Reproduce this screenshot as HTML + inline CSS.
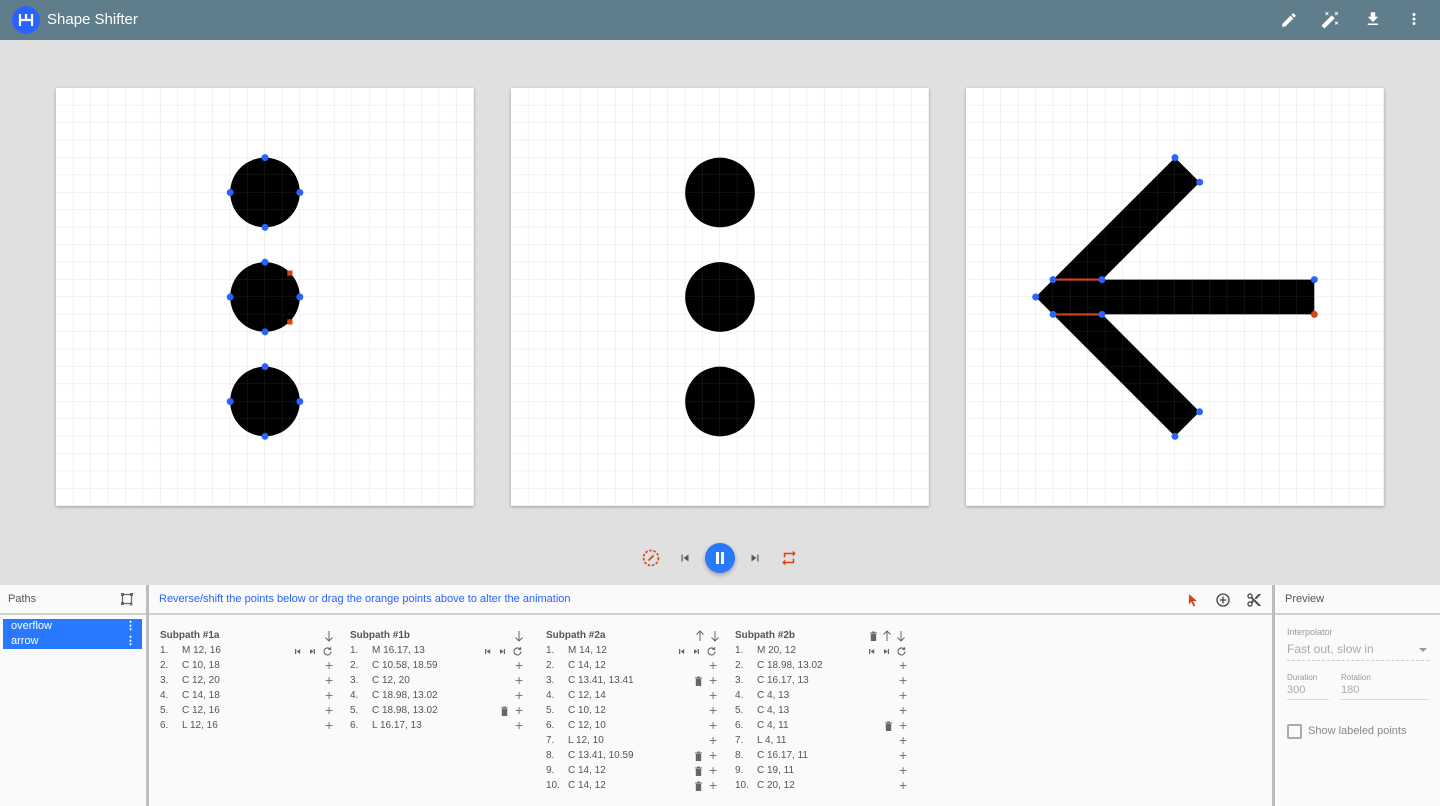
<!DOCTYPE html>
<html><head><meta charset="utf-8"><style>
*{box-sizing:border-box;margin:0;padding:0}
body{width:1440px;height:806px;overflow:hidden;background:#e0e0e0;font-family:"Liberation Sans",sans-serif;position:relative}
.top{position:absolute;left:0;top:0;width:1440px;height:40px;background:#607d8b;color:#fff}
.logo{position:absolute;left:12px;top:6px;width:28px;height:28px;border-radius:50%;background:#2962ff}
.title{position:absolute;left:47px;top:11px;font-size:15px}
.cv{position:absolute;top:88px;width:418px;height:418px;background:#fff;box-shadow:0 1px 3px rgba(0,0,0,.3)}
.bottom{position:absolute;left:0;top:585px;width:1440px;height:221px;background:#fafafa}
.hdr{position:absolute;top:0;height:30px;border-bottom:2px solid #d0d0d0;font-size:11px;color:#555;line-height:29px}
.vd{position:absolute;top:0;width:3px;height:221px;background:#bdbdbd}
.sel{position:absolute;left:3px;width:139px;height:15px;background:#2979ff;color:#fff;font-size:11px;line-height:15px;padding-left:8px}
.sel b{position:absolute;right:6px;top:0;font-weight:bold}
.col{position:absolute;top:43px;font-size:10px;color:#555}
.col div{height:15px;line-height:15px;position:relative;white-space:nowrap}
.col .h{font-weight:bold;color:#555}
.n{display:inline-block;width:22px}
.ic{position:absolute;top:0;color:#777;font-size:14px;line-height:15px}
.ic svg{vertical-align:middle}
.lbl{position:absolute;font-size:8px;color:#999}
.val{position:absolute;font-size:11px;color:#aaa}
</style></head><body>
<svg width="0" height="0" style="position:absolute"><defs>
<pattern id="g" width="1" height="1" patternUnits="userSpaceOnUse"><path d="M1 0V1H0" fill="none" stroke="#e2e2e2" stroke-width="0.06"/></pattern>
<pattern id="g2" width="1" height="1" patternUnits="userSpaceOnUse"><path d="M1 0V1H0" fill="none" stroke="#fff" stroke-opacity=".13" stroke-width="0.06"/></pattern>
<symbol id="sk" viewBox="0 0 39 13"><path fill="#666" d="M1 4h1.2v5H1zm1.6 2.5l3.6 2.5V4zM16 4l3.6 2.5L16 9zM19.8 4H21v5h-1.2z"/><path d="M37 6.5a3.5 3.5 0 1 1-1-2.5" fill="none" stroke="#666" stroke-width="1.1"/><path d="M36.6 2.2v2.2h-2.2" fill="none" stroke="#666" stroke-width="1.1"/></symbol>
<symbol id="tr" viewBox="0 0 10 12"><path fill="#666" d="M2 3h6v8H2zM1 1.5h8v1H1zM3.5 0.5h3v1h-3z"/></symbol>
<symbol id="up" viewBox="0 0 10 12"><path d="M5 11V1M1.5 4.5L5 1l3.5 3.5" fill="none" stroke="#666" stroke-width="1"/></symbol>
<symbol id="dn" viewBox="0 0 10 12"><path d="M5 1v10M1.5 7.5L5 11l3.5-3.5" fill="none" stroke="#666" stroke-width="1"/></symbol>
</defs></svg>
<div class="top">
 <div class="logo"><svg width="28" height="28" viewBox="0 0 28 28"><path d="M8 8v12M14 8v6M20 8v12M8 14h12" stroke="#fff" stroke-width="2.2" fill="none"/></svg></div>
 <div class="title">Shape Shifter</div>
 <svg style="position:absolute;left:1280px;top:11px" width="18" height="18" viewBox="0 0 24 24"><path fill="#fff" d="M3 17.25V21h3.75L17.81 9.94l-3.75-3.75L3 17.25zM20.71 7.04a1 1 0 000-1.41l-2.34-2.34a1 1 0 00-1.41 0l-1.83 1.83 3.75 3.75 1.83-1.83z"/></svg>
 <svg style="position:absolute;left:1321px;top:10px" width="19" height="19" viewBox="0 0 24 24"><path fill="#fff" d="M7.5 5.6L10 7 8.6 4.5 10 2 7.5 3.4 5 2l1.4 2.5L5 7zm12 9.8L17 14l1.4 2.5L17 19l2.5-1.4L22 19l-1.4-2.5L22 14zM22 2l-2.5 1.4L17 2l1.4 2.5L17 7l2.5-1.4L22 7l-1.4-2.5zm-7.630 5.29a1 1 0 00-1.41 0L1.29 18.96a1 1 0 000 1.41l2.34 2.34a1 1 0 001.41 0L16.7 11.05a1 1 0 000-1.41l-2.33-2.35z"/></svg>
 <svg style="position:absolute;left:1364px;top:10px" width="18" height="18" viewBox="0 0 24 24"><path fill="#fff" d="M19 9h-4V3H9v6H5l7 7 7-7zM5 18v2h14v-2H5z"/></svg>
 <svg style="position:absolute;left:1405px;top:10px" width="18" height="18" viewBox="0 0 24 24"><path fill="#fff" d="M12 8a2 2 0 100-4 2 2 0 000 4zm0 2a2 2 0 100 4 2 2 0 000-4zm0 6a2 2 0 100 4 2 2 0 000-4z"/></svg>
</div>

<div class="cv" style="left:56px"><svg width="418" height="418" viewBox="0 0 24 24">
<rect width="24" height="24" fill="url(#g)"/>
<g fill="#000"><circle cx="12" cy="6" r="2"/><circle cx="12" cy="12" r="2"/><circle cx="12" cy="18" r="2"/></g>
<rect width="24" height="24" fill="url(#g2)"/>
<g fill="#2962ff"><circle cx="12" cy="4" r=".2"/><circle cx="10" cy="6" r=".2"/><circle cx="14" cy="6" r=".2"/><circle cx="12" cy="8" r=".2"/>
<circle cx="12" cy="10" r=".2"/><circle cx="10" cy="12" r=".2"/><circle cx="14" cy="12" r=".2"/><circle cx="12" cy="14" r=".2"/>
<circle cx="12" cy="16" r=".2"/><circle cx="10" cy="18" r=".2"/><circle cx="14" cy="18" r=".2"/><circle cx="12" cy="20" r=".2"/></g>
<g fill="#d84315"><rect x="13.28" y="10.48" width=".3" height=".3"/><rect x="13.28" y="13.28" width=".3" height=".3"/></g></svg></div>

<div class="cv" style="left:511px"><svg width="418" height="418" viewBox="0 0 24 24">
<rect width="24" height="24" fill="url(#g)"/>
<g fill="#000"><circle cx="12" cy="6" r="2"/><circle cx="12" cy="12" r="2"/><circle cx="12" cy="18" r="2"/></g>
<rect width="24" height="24" fill="url(#g2)"/></svg></div>

<div class="cv" style="left:966px"><svg width="418" height="418" viewBox="0 0 24 24">
<rect width="24" height="24" fill="url(#g)"/>
<path fill="#000" d="M20 11H7.83l5.59-5.59L12 4l-8 8 8 8 1.41-1.41L7.83 13H20z"/>
<rect width="24" height="24" fill="url(#g2)"/>
<g stroke="#d84315" stroke-width=".12"><path d="M5 11H7.8M5 13H7.8"/></g>
<g fill="#2962ff"><circle cx="12" cy="4" r=".2"/><circle cx="13.42" cy="5.41" r=".2"/><circle cx="20" cy="11" r=".2"/><circle cx="7.8" cy="11" r=".2"/><circle cx="5" cy="11" r=".2"/><circle cx="4" cy="12" r=".2"/><circle cx="5" cy="13" r=".2"/><circle cx="7.8" cy="13" r=".2"/><circle cx="13.41" cy="18.59" r=".2"/><circle cx="12" cy="20" r=".2"/></g>
<circle cx="20" cy="13" r=".2" fill="#d84315"/></svg></div>

<svg style="position:absolute;left:641px;top:548px" width="20" height="20" viewBox="0 0 24 24"><circle cx="12" cy="12" r="9" fill="none" stroke="#d84315" stroke-width="2" stroke-dasharray="3 2"/><path d="M9 15l6-6" stroke="#d84315" stroke-width="2"/></svg>
<svg style="position:absolute;left:678px;top:551px" width="14" height="14" viewBox="0 0 24 24"><path fill="#555" d="M6 6h2v12H6zm3.5 6l8.5 6V6z"/></svg>
<div style="position:absolute;left:705px;top:543px;width:30px;height:30px;border-radius:50%;background:#2979ff;box-shadow:0 2px 4px rgba(0,0,0,.3)"><svg width="30" height="30" viewBox="0 0 30 30"><path d="M11 9h3v12h-3zM16 9h3v12h-3z" fill="#fff"/></svg></div>
<svg style="position:absolute;left:748px;top:551px" width="14" height="14" viewBox="0 0 24 24"><path fill="#555" d="M6 18l8.5-6L6 6v12zM16 6v12h2V6h-2z"/></svg>
<svg style="position:absolute;left:780px;top:549px" width="18" height="18" viewBox="0 0 24 24"><path fill="#d84315" d="M7 7h10v3l4-4-4-4v3H5v6h2V7zm10 10H7v-3l-4 4 4 4v-3h12v-6h-2v4z"/></svg>

<div class="bottom">
 <div class="hdr" style="left:0;width:147px;padding-left:8px">Paths<svg style="position:absolute;left:120px;top:7px" width="15" height="15" viewBox="0 0 15 15"><rect x="2.5" y="2.5" width="9" height="9" fill="none" stroke="#666" stroke-width="1.2"/><g fill="#666"><rect x="1" y="1" width="3" height="3"/><rect x="10" y="1" width="3" height="3"/><rect x="1" y="10" width="3" height="3"/></g><path d="M11 10v4M9 12h4" stroke="#666"/></svg></div>
 <div class="vd" style="left:146px"></div>
 <div class="hdr" style="left:149px;width:1124px;padding-left:10px;color:#2962ff">Reverse/shift the points below or drag the orange points above to alter the animation
  <svg style="position:absolute;left:1037px;top:7px" width="14" height="16" viewBox="0 0 24 24"><path fill="#d84315" d="M5 2l14 12h-7l4 8-3 1-4-8-4 5z"/></svg>
  <svg style="position:absolute;left:1066px;top:7px" width="16" height="16" viewBox="0 0 24 24"><circle cx="12" cy="12" r="9" fill="none" stroke="#444" stroke-width="2"/><path d="M12 7v10M7 12h10" stroke="#444" stroke-width="2"/></svg>
  <svg style="position:absolute;left:1097px;top:7px" width="16" height="16" viewBox="0 0 24 24"><path fill="#444" d="M9.64 7.64c.23-.5.36-1.05.36-1.64 0-2.21-1.790-4-4-4S2 3.79 2 6s1.79 4 4 4c.59 0 1.140-.13 1.64-.36L10 12l-2.36 2.36C7.14 14.13 6.59 14 6 14c-2.21 0-4 1.79-4 4s1.79 4 4 4 4-1.79 4-4c0-.59-.13-1.14-.36-1.64L12 14l7 7h3v-1L9.64 7.64zM6 8a2 2 0 110-4 2 2 0 010 4zm0 12a2 2 0 110-4 2 2 0 010 4zm6-7.5a.5.5 0 110-1 .5.5 0 010 1zM19 3l-6 6 2 2 7-7V3z"/></svg>
 </div>
 <div class="vd" style="left:1272px"></div>
 <div class="hdr" style="left:1275px;width:165px;padding-left:10px">Preview</div>

 <div class="sel" style="top:34px">overflow<b>⋮</b></div>
 <div class="sel" style="top:49px">arrow<b>⋮</b></div>

 <div class="col" style="left:160px;width:180px">
  <div class="h">Subpath #1a<span class="ic" style="left:164px"><svg width="10" height="12"><use href="#dn"/></svg></span></div>
  <div><span class="n">1.</span>M 12, 16<span class="ic" style="left:134px"><svg width="39" height="13"><use href="#sk"/></svg></span></div>
  <div><span class="n">2.</span>C 10, 18<span class="ic" style="left:165px">+</span></div>
  <div><span class="n">3.</span>C 12, 20<span class="ic" style="left:165px">+</span></div>
  <div><span class="n">4.</span>C 14, 18<span class="ic" style="left:165px">+</span></div>
  <div><span class="n">5.</span>C 12, 16<span class="ic" style="left:165px">+</span></div>
  <div><span class="n">6.</span>L 12, 16<span class="ic" style="left:165px">+</span></div>
 </div>
 <div class="col" style="left:350px;width:180px">
  <div class="h">Subpath #1b<span class="ic" style="left:164px"><svg width="10" height="12"><use href="#dn"/></svg></span></div>
  <div><span class="n">1.</span>M 16.17, 13<span class="ic" style="left:134px"><svg width="39" height="13"><use href="#sk"/></svg></span></div>
  <div><span class="n">2.</span>C 10.58, 18.59<span class="ic" style="left:165px">+</span></div>
  <div><span class="n">3.</span>C 12, 20<span class="ic" style="left:165px">+</span></div>
  <div><span class="n">4.</span>C 18.98, 13.02<span class="ic" style="left:165px">+</span></div>
  <div><span class="n">5.</span>C 18.98, 13.02<span class="ic" style="left:150px"><svg width="9" height="11"><use href="#tr"/></svg></span><span class="ic" style="left:165px">+</span></div>
  <div><span class="n">6.</span>L 16.17, 13<span class="ic" style="left:165px">+</span></div>
 </div>
 <div class="col" style="left:546px;width:180px">
  <div class="h">Subpath #2a<span class="ic" style="left:149px"><svg width="10" height="12"><use href="#up"/></svg> <svg width="10" height="12" style="margin-left:1px"><use href="#dn"/></svg></span></div>
  <div><span class="n">1.</span>M 14, 12<span class="ic" style="left:132px"><svg width="39" height="13"><use href="#sk"/></svg></span></div>
  <div><span class="n">2.</span>C 14, 12<span class="ic" style="left:163px">+</span></div>
  <div><span class="n">3.</span>C 13.41, 13.41<span class="ic" style="left:148px"><svg width="9" height="11"><use href="#tr"/></svg></span><span class="ic" style="left:163px">+</span></div>
  <div><span class="n">4.</span>C 12, 14<span class="ic" style="left:163px">+</span></div>
  <div><span class="n">5.</span>C 10, 12<span class="ic" style="left:163px">+</span></div>
  <div><span class="n">6.</span>C 12, 10<span class="ic" style="left:163px">+</span></div>
  <div><span class="n">7.</span>L 12, 10<span class="ic" style="left:163px">+</span></div>
  <div><span class="n">8.</span>C 13.41, 10.59<span class="ic" style="left:148px"><svg width="9" height="11"><use href="#tr"/></svg></span><span class="ic" style="left:163px">+</span></div>
  <div><span class="n">9.</span>C 14, 12<span class="ic" style="left:148px"><svg width="9" height="11"><use href="#tr"/></svg></span><span class="ic" style="left:163px">+</span></div>
  <div><span class="n">10.</span>C 14, 12<span class="ic" style="left:148px"><svg width="9" height="11"><use href="#tr"/></svg></span><span class="ic" style="left:163px">+</span></div>
 </div>
 <div class="col" style="left:735px;width:180px">
  <div class="h">Subpath #2b<span class="ic" style="left:134px"><svg width="9" height="11"><use href="#tr"/></svg> <svg width="10" height="12"><use href="#up"/></svg> <svg width="10" height="12"><use href="#dn"/></svg></span></div>
  <div><span class="n">1.</span>M 20, 12<span class="ic" style="left:133px"><svg width="39" height="13"><use href="#sk"/></svg></span></div>
  <div><span class="n">2.</span>C 18.98, 13.02<span class="ic" style="left:164px">+</span></div>
  <div><span class="n">3.</span>C 16.17, 13<span class="ic" style="left:164px">+</span></div>
  <div><span class="n">4.</span>C 4, 13<span class="ic" style="left:164px">+</span></div>
  <div><span class="n">5.</span>C 4, 13<span class="ic" style="left:164px">+</span></div>
  <div><span class="n">6.</span>C 4, 11<span class="ic" style="left:149px"><svg width="9" height="11"><use href="#tr"/></svg></span><span class="ic" style="left:164px">+</span></div>
  <div><span class="n">7.</span>L 4, 11<span class="ic" style="left:164px">+</span></div>
  <div><span class="n">8.</span>C 16.17, 11<span class="ic" style="left:164px">+</span></div>
  <div><span class="n">9.</span>C 19, 11<span class="ic" style="left:164px">+</span></div>
  <div><span class="n">10.</span>C 20, 12<span class="ic" style="left:164px">+</span></div>
 </div>

 <div class="lbl" style="left:1287px;top:42px;font-size:9px">Interpolator</div>
 <div class="val" style="left:1287px;top:57px;font-size:12px">Fast out, slow in</div>
 <div style="position:absolute;left:1419px;top:63px;border:4px solid transparent;border-top:4px solid #999"></div>
 <div style="position:absolute;left:1287px;top:75px;width:142px;border-top:1px dashed #ccc"></div>
 <div class="lbl" style="left:1287px;top:88px">Duration</div>
 <div class="val" style="left:1287px;top:99px">300</div>
 <div style="position:absolute;left:1287px;top:114px;width:42px;border-top:1px solid #ddd"></div>
 <div class="lbl" style="left:1341px;top:88px">Rotation</div>
 <div class="val" style="left:1341px;top:99px">180</div>
 <div style="position:absolute;left:1341px;top:114px;width:88px;border-top:1px solid #ddd"></div>
 <div style="position:absolute;left:1287px;top:139px;width:15px;height:15px;border:2px solid #aaa;border-radius:2px"></div>
 <div class="val" style="left:1308px;top:140px;color:#888;font-size:11px">Show labeled points</div>
</div>
</body></html>
